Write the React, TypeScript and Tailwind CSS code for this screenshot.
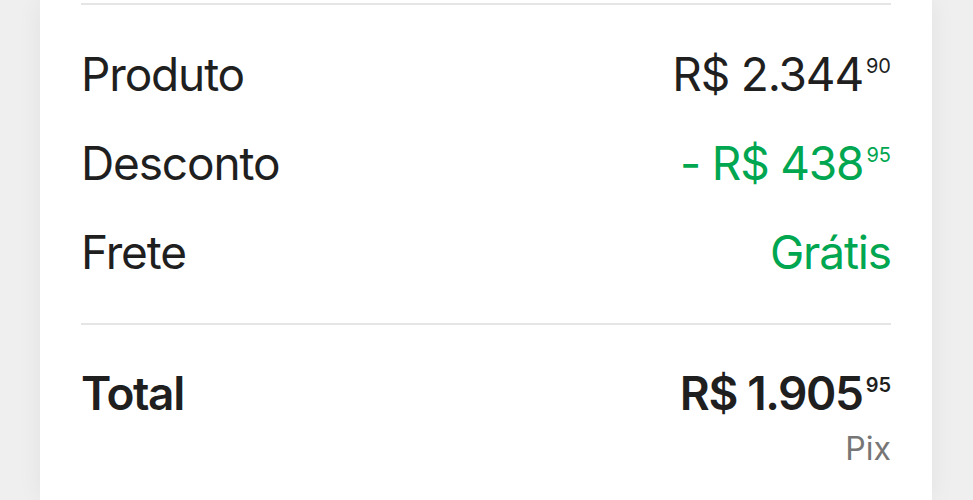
function Price({ value, cents, className = '' }: { value: string; cents: string; className?: string }) {
  return (
    <span className={`inline-flex items-start ${className}`}>
      <span>{value}</span>
      <span className="text-[20px] leading-none mt-[26px] ml-[3px] tracking-normal">{cents}</span>
    </span>
  );
}

export default function App() {
  return (
    <div
      className="h-[500px] w-[973px] overflow-hidden bg-[#efefef] flex justify-center"
      style={{ fontFamily: 'Inter, "Noto Sans", sans-serif' }}
    >
      <div className="w-[892px] -ml-[1px] h-full bg-white px-[41px] pt-[3px] shadow-[0_0_24px_rgba(0,0,0,0.06)] text-[#1f1f1f]">
        <div className="h-[2px] bg-[#e5e5e5]" />

        <div className="mt-[25px] text-[46px] leading-[89px] tracking-[-0.025em]">
          <div className="flex justify-between items-start h-[89px]">
            <span>Produto</span>
            <Price value="R$ 2.344" cents="90" />
          </div>
          <div className="flex justify-between items-start h-[89px]">
            <span>Desconto</span>
            <Price value="- R$ 438" cents="95" className="text-[#00a650]" />
          </div>
          <div className="flex justify-between items-start h-[89px]">
            <span>Frete</span>
            <span className="text-[#00a650]">Grátis</span>
          </div>
        </div>

        <div className="mt-[26px] h-[2px] bg-[#e5e5e5]" />

        <div className="mt-[24px] flex justify-between items-start h-[89px] text-[46px] leading-[89px] font-semibold tracking-[-0.03em]">
          <span>Total</span>
          <Price value="R$ 1.905" cents="95" />
        </div>
        <div className="-mt-[5px] flex justify-end text-[32px] leading-[32px] text-[#767676]">
          Pix
        </div>
      </div>
    </div>
  );
}
